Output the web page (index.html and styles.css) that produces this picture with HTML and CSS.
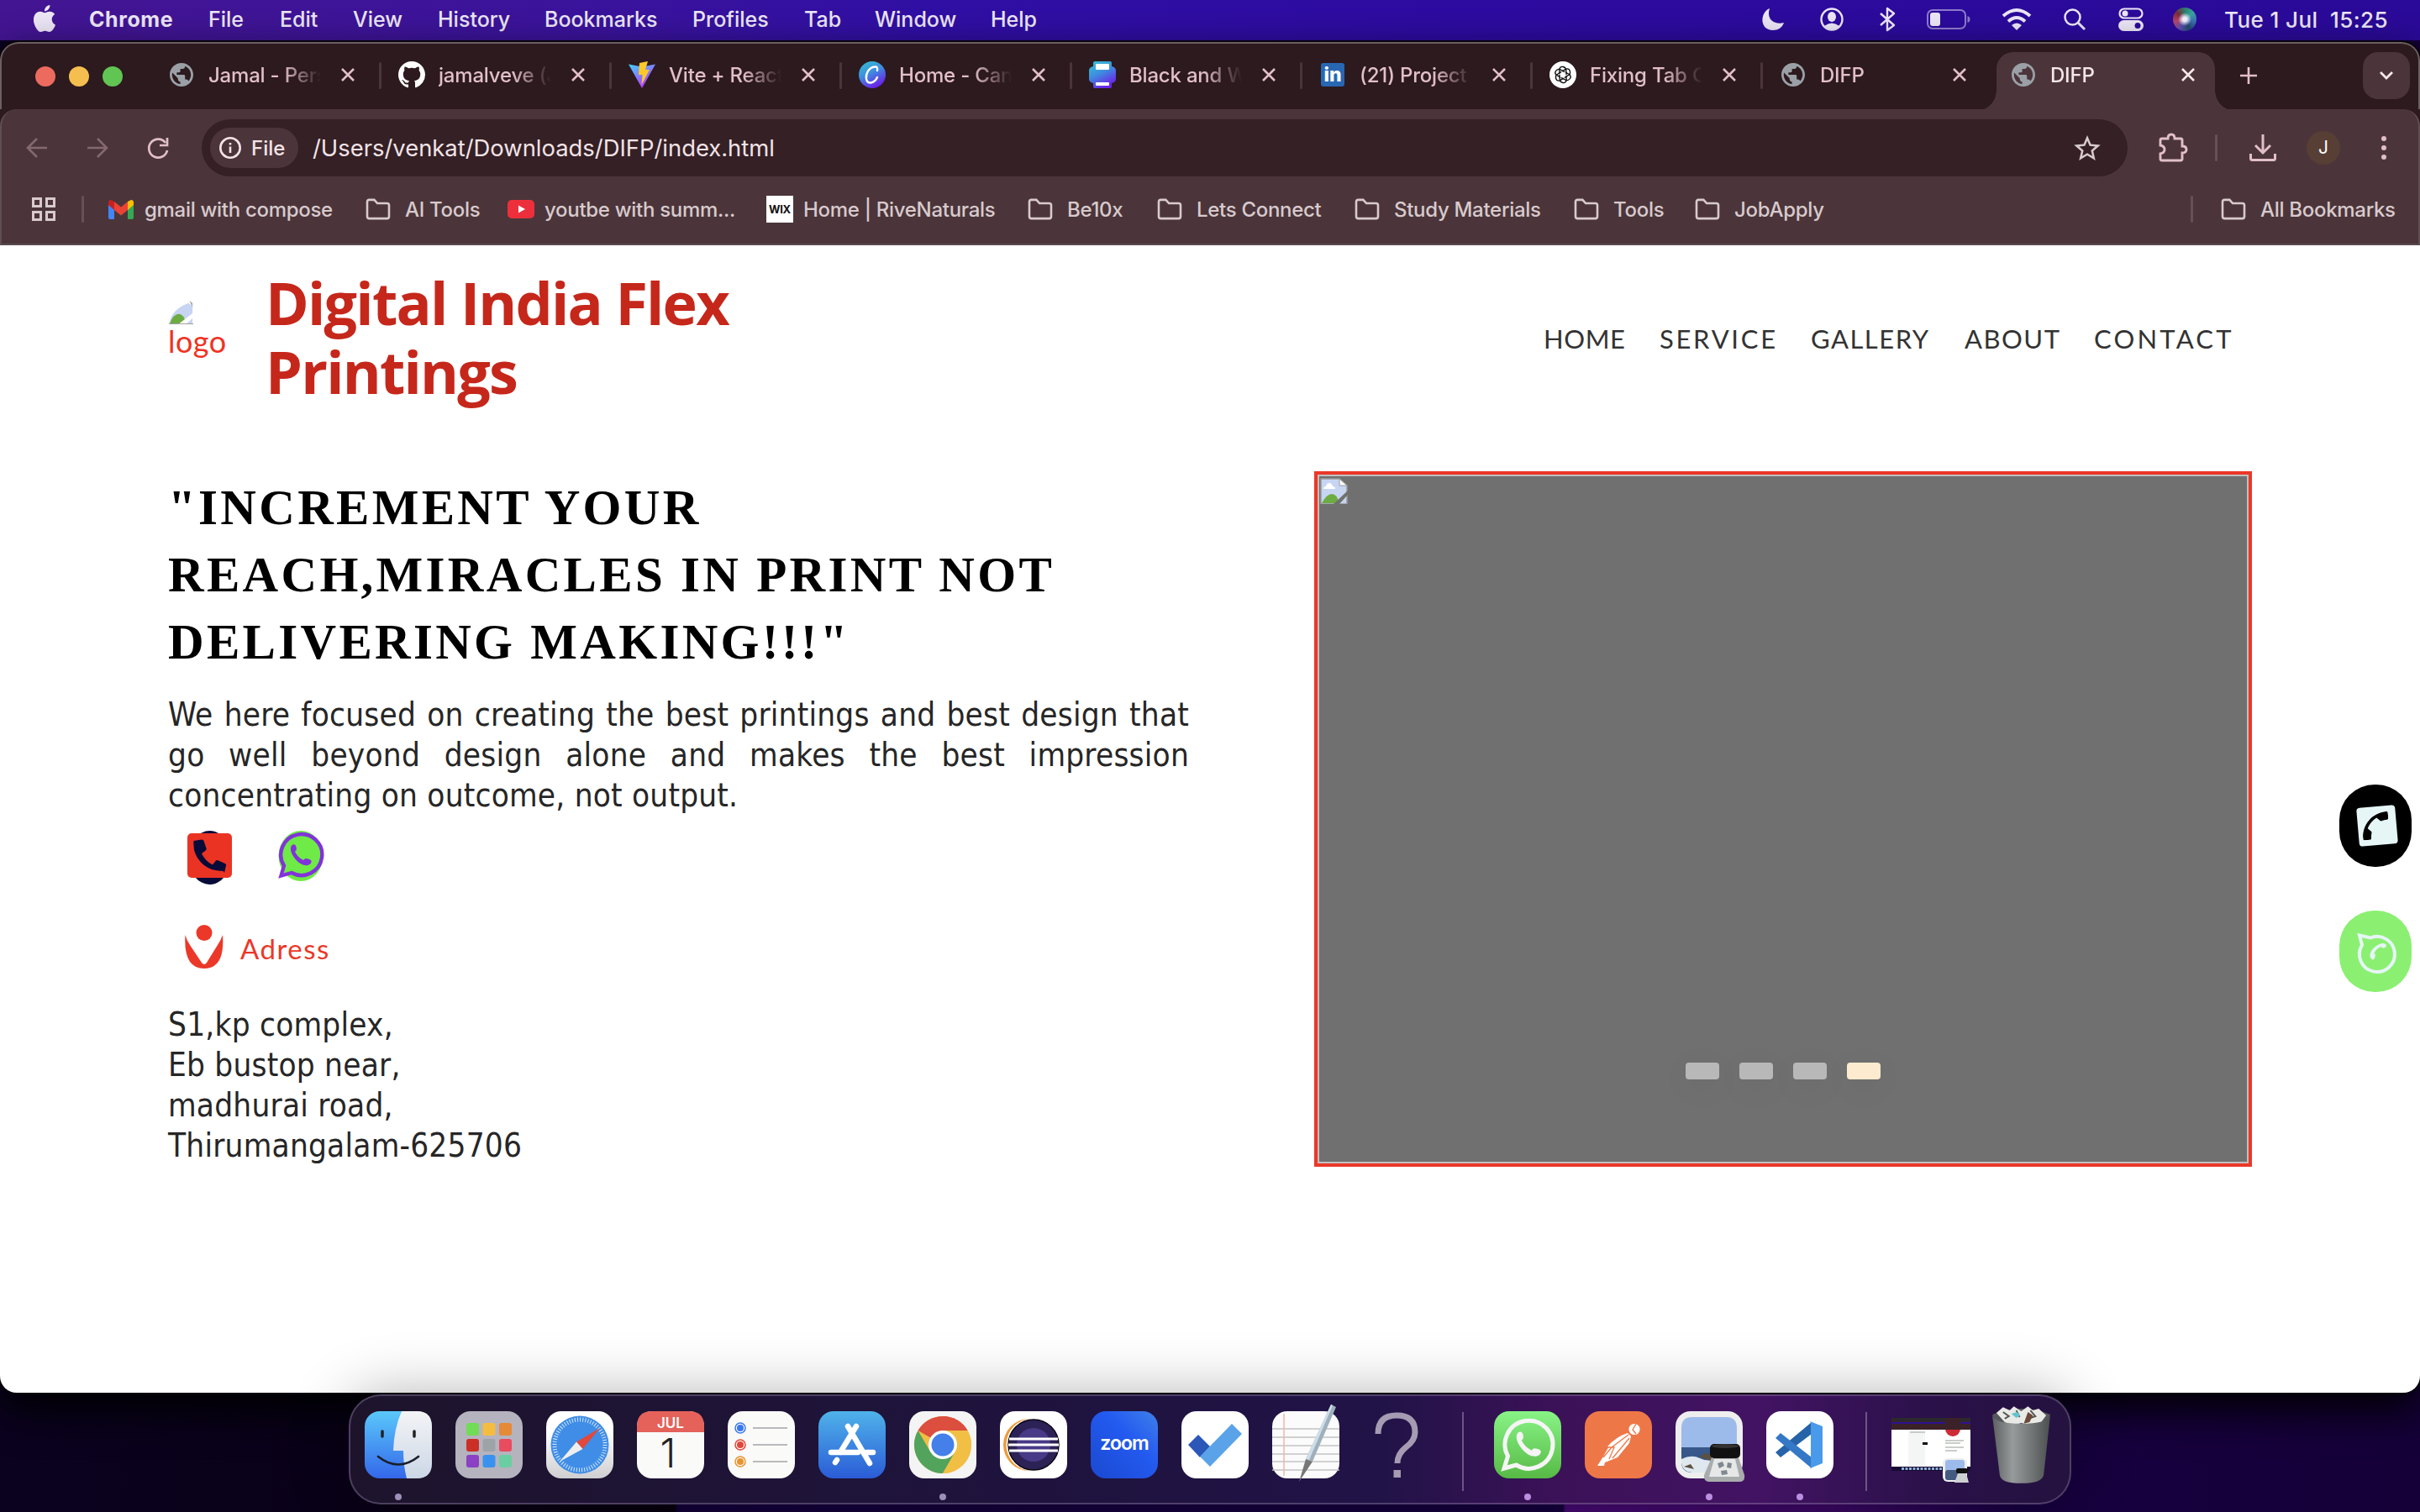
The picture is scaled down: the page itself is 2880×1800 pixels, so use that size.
FILE: index.html
```html
<!DOCTYPE html>
<html lang="en">
<head>
<meta charset="utf-8">
<title>DIFP</title>
<link rel="stylesheet" href="styles.css">
</head>
<body>
<svg class="defs" width="0" height="0" aria-hidden="true">
  <symbol id="globe" viewBox="2 2 20 20"><path d="M12 2C6.480 2 2 6.480 2 12s4.480 10 10 10 10-4.480 10-10S17.520 2 12 2zm-1 17.930c-3.950-.49-7-3.850-7-7.930 0-.62.080-1.210.210-1.790L9 15v1c0 1.100.9 2 2 2v1.930zm6.900-2.540c-.26-.81-1-1.390-1.900-1.390h-1v-3c0-.55-.45-1-1-1H8v-2h2c.55 0 1-.45 1-1V7h2c1.100 0 2-.9 2-2v-.41c2.930 1.190 5 4.060 5 7.410 0 2.080-.8 3.970-2.100 5.390z" fill="#9aa0a6"/></symbol>
  <symbol id="close" viewBox="0 0 20 20"><path d="M3 3l14 14M17 3L3 17" stroke="currentColor" stroke-width="2.600" fill="none"/></symbol>
  <symbol id="folder" viewBox="0 0 32 28"><path d="M2 4.500Q2 2 4.500 2H11l4 4.500h12.500Q30 6.500 30 9v14.500Q30 26 27.500 26h-23Q2 26 2 23.500z" fill="none" stroke="currentColor" stroke-width="2.800"/></symbol>
  <symbol id="call" viewBox="3 3 18 18"><path d="M6.620 10.790c1.440 2.830 3.760 5.140 6.590 6.590l2.200-2.200c.27-.27.67-.36 1.020-.24 1.120.37 2.330.57 3.570.57.55 0 1 .45 1 1V20c0 .55-.45 1-1 1-9.390 0-17-7.610-17-17 0-.55.450-1 1-1h3.500c.55 0 1 .45 1 1 0 1.250.2 2.450.57 3.570.110.350.030.740-.25 1.020l-2.200 2.200z" fill="currentColor"/></symbol>
  <symbol id="handset" viewBox="0 0 30 30"><path d="M2 6Q3 1 7 1.500Q9 2 9.500 6.500Q9.800 9 7.500 10.500Q11 18 18.500 21.500Q20 18.500 23 19.500Q28 20.500 28.500 22.500Q28.500 27 23 28Q15 28.500 8 20Q1.500 12 2 6z" fill="currentColor"/></symbol>
  <symbol id="broken" viewBox="0 0 33 31"><path d="M1 1H23l9 8V31H1z" fill="#c7d5f3" stroke="#9a9a9a" stroke-width="1.500"/><path d="M23 1v8h9z" fill="#fff" stroke="#9a9a9a"/><path d="M4 13q0-3 3-3 1-4 4-4t4 4q3 0 3 3z" fill="#fff"/><path d="M2 30q6-11 12-11t9 11z" fill="#6cac43"/><path d="M16 31L33 15v5L23 31z" class="slash"/></symbol>
</svg>

<header class="menubar">
  <nav class="menus">
    <svg class="apple" viewBox="1.500 0 21 24"><path fill="currentColor" d="M12.152 6.896c-.948 0-2.415-1.078-3.960-1.040-2.040.027-3.910 1.183-4.961 3.014-2.117 3.675-.546 9.103 1.519 12.090 1.013 1.454 2.208 3.090 3.792 3.039 1.520-.065 2.090-.987 3.935-.987 1.831 0 2.350.987 3.960.948 1.637-.026 2.676-1.480 3.676-2.948 1.156-1.688 1.636-3.325 1.662-3.415-.039-.013-3.182-1.221-3.220-4.857-.026-3.040 2.480-4.494 2.597-4.559-1.429-2.090-3.623-2.324-4.390-2.376-2-.156-3.675 1.090-4.610 1.090zM15.530 3.830c.843-1.012 1.400-2.427 1.245-3.830-1.207.052-2.662.805-3.532 1.818-.78.896-1.454 2.338-1.273 3.714 1.338.104 2.715-.688 3.559-1.701"/></svg>
    <b>Chrome</b><span>File</span><span>Edit</span><span>View</span><span>History</span><span>Bookmarks</span><span>Profiles</span><span>Tab</span><span>Window</span><span>Help</span>
  </nav>
  <div class="status">
    <svg width="28" height="28" viewBox="0 0 28 28"><path d="M10 1C-2 6-2 27 14 27c6 0 11-3 13-9C14 21 6 13 10 1z" fill="currentColor"/></svg>
    <svg width="28" height="28" viewBox="0 0 28 28"><circle cx="14" cy="14" r="12.500" fill="none" stroke="currentColor" stroke-width="2.400"/><ellipse cx="14" cy="11" rx="5" ry="6" fill="currentColor"/><path d="M5 22q9-7 18 0-9 8-18 0z" fill="currentColor"/></svg>
    <svg width="20" height="30" viewBox="0 0 20 30"><path d="M2 8l16 14-8 6V2l8 6L2 22" fill="none" stroke="currentColor" stroke-width="2.400" stroke-linejoin="round"/></svg>
    <svg width="52" height="24" viewBox="0 0 52 24"><rect x="1" y="1" width="45" height="22" rx="6" fill="none" stroke="#8f7bcb" stroke-width="2"/><rect x="4" y="4" width="12" height="16" rx="3" fill="currentColor"/><path d="M48.500 8q3 1 3 4t-3 4z" fill="#8f7bcb"/></svg>
    <svg width="36" height="26" viewBox="0 0 36 26"><path d="M2 9q16-14 32 0M8 15.500q10-9 20 0" fill="none" stroke="currentColor" stroke-width="4"/><path d="M12 20q6-5 12 0l-6 6z" fill="currentColor"/></svg>
    <svg width="26" height="26" viewBox="0 0 26 26"><circle cx="10.500" cy="10.500" r="9" fill="none" stroke="currentColor" stroke-width="2.500"/><path d="M17 17l8 8" stroke="currentColor" stroke-width="3"/></svg>
    <svg width="30" height="28" viewBox="0 0 30 28"><rect x="1.500" y="1.500" width="27" height="11" rx="5.500" fill="none" stroke="currentColor" stroke-width="2.200"/><circle cx="8" cy="7" r="3.500" fill="currentColor"/><rect y="15" width="30" height="13" rx="6.500" fill="currentColor"/><circle cx="23" cy="21.500" r="3.500" fill="#2a0a98"/></svg>
    <i class="siri"></i>
    <span class="clock">Tue 1 Jul&nbsp; 15:25</span>
  </div>
</header>

<main class="window">
  <div class="tabstrip">
    <div class="lights"><i class="red"></i><i class="amber"></i><i class="green"></i></div>
    <div class="tab"><svg class="fav small"><use href="#globe"/></svg><span class="title">Jamal - Pers</span><svg class="x"><use href="#close"/></svg></div>
    <div class="tab"><svg class="fav" viewBox="0 0 16 16"><path fill="#fff" d="M8 0C3.580 0 0 3.580 0 8c0 3.540 2.290 6.530 5.470 7.590.4.070.55-.17.55-.38 0-.19-.01-.82-.01-1.490-2.010.37-2.530-.49-2.690-.94-.09-.23-.48-.94-.82-1.130-.28-.15-.68-.52-.01-.53.63-.01 1.080.58 1.230.82.72 1.210 1.870.87 2.330.66.070-.52.28-.87.51-1.070-1.780-.2-3.640-.89-3.640-3.950 0-.87.31-1.590.82-2.150-.08-.2-.36-1.020.080-2.120 0 0 .67-.21 2.200.82.64-.18 1.320-.27 2-.27s1.360.090 2 .27c1.530-1.040 2.200-.82 2.200-.82.44 1.100.16 1.920.080 2.120.51.56.82 1.270.82 2.150 0 3.070-1.870 3.750-3.650 3.950.29.25.54.73.54 1.480 0 1.070-.01 1.930-.01 2.200 0 .21.15.46.55.38A8.010 8.010 0 0 0 16 8c0-4.420-3.580-8-8-8z"/></svg><span class="title">jamalveve (J</span><svg class="x"><use href="#close"/></svg></div>
    <div class="tab"><svg class="fav" viewBox="0 0 32 32"><defs><linearGradient id="vite" x2=".6" y2="1"><stop stop-color="#41d1ff"/><stop offset="1" stop-color="#bd34fe"/></linearGradient></defs><path d="M0 3.500L16 32 32 3.500 16 6.500z" fill="url(#vite)"/><path d="M13 2l10-2-3 10h5L15.500 28l1-12H12z" fill="#ffc928"/></svg><span class="title">Vite + React</span><svg class="x"><use href="#close"/></svg></div>
    <div class="tab"><svg class="fav" viewBox="0 0 32 32"><defs><linearGradient id="canva" x2=".5" y2="1"><stop stop-color="#35c4cc"/><stop offset=".5" stop-color="#3d8fe0"/><stop offset="1" stop-color="#6a25e8"/></linearGradient></defs><circle cx="16" cy="16" r="16" fill="url(#canva)"/><path d="M22 11q1-5-3-4.500C12 7 8 15 9 21q1 5 5.500 4.500Q20 24 22 19" fill="none" stroke="#fff" stroke-width="2.400" stroke-linecap="round"/></svg><span class="title">Home - Can</span><svg class="x"><use href="#close"/></svg></div>
    <div class="tab"><svg class="fav" viewBox="0 0 32 32"><path d="M7 0h18q2 0 2 2v4q5 1 5 5v10q0 4-5 5v4q0 2-2 2H7q-2 0-2-2v-4q-5-1-5-5V11q0-4 5-5V2q0-2 2-2z" fill="url(#canva)"/><rect x="8" y="3" width="16" height="7" rx="1" fill="#fff"/><rect x="8" y="25" width="16" height="4" rx="1" fill="#fff"/></svg><span class="title">Black and W</span><svg class="x"><use href="#close"/></svg></div>
    <div class="tab"><span class="fav small linkedin">in</span><span class="title">(21) Project</span><svg class="x"><use href="#close"/></svg></div>
    <div class="tab"><svg class="fav" viewBox="-16 -16 32 32"><circle r="16" fill="#fff"/><g fill="none" stroke="#111" stroke-width="1.500" transform="scale(.92)"><path id="petal" d="M-1-4.500l5-3q4-1 5 2.500t-1 5L2 4"/><use href="#petal" transform="rotate(60)"/><use href="#petal" transform="rotate(120)"/><use href="#petal" transform="rotate(180)"/><use href="#petal" transform="rotate(240)"/><use href="#petal" transform="rotate(300)"/></g></svg><span class="title">Fixing Tab C</span><svg class="x"><use href="#close"/></svg></div>
    <div class="tab last"><svg class="fav small"><use href="#globe"/></svg><span class="title">DIFP</span><svg class="x"><use href="#close"/></svg></div>
    <div class="tab active"><svg class="fav small"><use href="#globe"/></svg><span class="title">DIFP</span><svg class="x"><use href="#close"/></svg></div>
    <svg class="plus" viewBox="0 0 22 22"><path d="M11 1v20M1 11h20" stroke="currentColor" stroke-width="2.600"/></svg>
    <div class="chev"><svg width="18" height="12" viewBox="0 0 18 12"><path d="M2 2l7 7 7-7" fill="none" stroke="currentColor" stroke-width="2.800"/></svg></div>
  </div>

  <div class="toolbar">
    <div class="navs">
      <svg class="dim" width="26" height="26" viewBox="0 0 26 26"><path d="M25 13H2M13 2L2 13l11 11" fill="none" stroke="currentColor" stroke-width="2.600"/></svg>
      <svg class="dim" width="26" height="26" viewBox="0 0 26 26"><path d="M1 13h23M13 2l11 11-11 11" fill="none" stroke="currentColor" stroke-width="2.600"/></svg>
      <svg width="26" height="26" viewBox="0 0 26 26"><path d="M22 7A11 11 0 1 0 24 16" fill="none" stroke="currentColor" stroke-width="2.700"/><path d="M24 1v9h-9" fill="none" stroke="currentColor" stroke-width="2.700"/></svg>
    </div>
    <div class="omnibox">
      <div class="chip"><svg width="26" height="26" viewBox="0 0 26 26"><circle cx="13" cy="13" r="11.700" fill="none" stroke="currentColor" stroke-width="2.600"/><path d="M13 11.500V19M13 7v2.600" stroke="currentColor" stroke-width="2.600"/></svg><span>File</span></div>
      <span class="url">/Users/venkat/Downloads/DIFP/index.html</span>
      <svg class="star" viewBox="2 2 20 19"><path fill="currentColor" d="M22 9.240l-7.190-.62L12 2 9.190 8.630 2 9.240l5.460 4.730L5.820 21 12 17.270 18.180 21l-1.630-7.030L22 9.240zM12 15.400l-3.760 2.270 1-4.280-3.320-2.880 4.380-.38L12 6.100l1.710 4.040 4.380.38-3.320 2.880 1 4.280L12 15.400z"/></svg>
    </div>
    <div class="actions">
      <svg width="34" height="34" viewBox="0 0 34 34"><path d="M4 6h7q0-5 4-5t4 5h7q2 0 2 2v7q5 0 5 4t-5 4v7q0 2-2 2H4q-2 0-2-2v-6q5-1 5-5t-5-5V8q0-2 2-2z" fill="none" stroke="currentColor" stroke-width="2.900"/></svg>
      <i class="sep"></i>
      <svg width="32" height="32" viewBox="0 0 32 32"><path d="M16 0v21M7 13l9 9 9-9M1.500 23v5.500q0 2 2 2h25q2 0 2-2V23" fill="none" stroke="currentColor" stroke-width="3"/></svg>
      <span class="avatar">J</span>
      <svg width="8" height="28" viewBox="0 0 8 28"><g fill="currentColor"><circle cx="4" cy="3" r="3"/><circle cx="4" cy="14" r="3"/><circle cx="4" cy="25" r="3"/></g></svg>
    </div>
  </div>

  <div class="bookmarks">
    <svg class="apps" viewBox="0 0 28 28"><path d="M1.500 1.500h9v9h-9zM17.500 1.500h9v9h-9zM1.500 17.500h9v9h-9zM17.500 17.500h9v9h-9z" fill="none" stroke="currentColor" stroke-width="3"/></svg>
    <i class="sep"></i>
    <div class="bm"><svg width="30" height="23" viewBox="0 0 30 23"><path d="M0 3v18q0 2 2 2h5V10z" fill="#4285f4"/><path d="M30 3v18q0 2-2 2h-5V10z" fill="#34a853"/><path d="M23 2l4-2q3 0 3 3v3l-7 6z" fill="#fbbc04"/><path d="M7 2L3 0Q0 0 0 3v3l7 6z" fill="#c5221f"/><path d="M7 2l8 6.500L23 2v10l-8 6.500L7 12z" fill="#ea4335"/></svg><span>gmail with compose</span></div>
    <div class="bm"><svg class="folder"><use href="#folder"/></svg><span>AI Tools</span></div>
    <div class="bm"><svg width="32" height="22" viewBox="0 0 32 22"><rect width="32" height="22" rx="5" fill="#ed2f3c"/><path d="M13 6.500l8 4.500-8 4.500z" fill="#fff"/></svg><span>youtbe with summ...</span></div>
    <div class="bm"><em class="wix">WIX</em><span>Home | RiveNaturals</span></div>
    <div class="bm"><svg class="folder"><use href="#folder"/></svg><span>Be10x</span></div>
    <div class="bm"><svg class="folder"><use href="#folder"/></svg><span>Lets Connect</span></div>
    <div class="bm"><svg class="folder"><use href="#folder"/></svg><span>Study Materials</span></div>
    <div class="bm"><svg class="folder"><use href="#folder"/></svg><span>Tools</span></div>
    <div class="bm"><svg class="folder"><use href="#folder"/></svg><span>JobApply</span></div>
    <i class="sep"></i>
    <div class="bm"><svg class="folder"><use href="#folder"/></svg><span>All Bookmarks</span></div>
  </div>

  <div class="page">
    <div class="site-header">
      <div class="logo"><svg class="logo-img" viewBox="0 0 33 31" preserveAspectRatio="none"><path d="M2 31Q3 12 26 3L31 8V31z" fill="#c7d5f3"/><path d="M27 0l4 3v6z" fill="#aaa"/><path d="M2 30Q8 15 16 18q6 3 6 12z" fill="#6cac43"/><path d="M13 31L33 15v6L23 31z" fill="#fff"/><path d="M1 30.500h31" stroke="#999"/></svg><span>logo</span></div>
      <h1>Digital India Flex<br>Printings</h1>
      <nav class="site-nav"><span class="home">HOME</span><span class="service">SERVICE</span><span>GALLERY</span><span>ABOUT</span><span class="reach">CONTACT</span></nav>
    </div>
    <div class="hero">
      <div class="copy">
        <h2>"INCREMENT YOUR<br>REACH,MIRACLES IN PRINT NOT<br>DELIVERING MAKING!!!"</h2>
        <p class="lead">We here focused on creating the best printings and best design that go well beyond design alone and makes the best impression concentrating on outcome, not output.</p>
        <div class="contact">
          <svg width="54" height="64" viewBox="0 0 54 64"><ellipse cx="27.500" cy="32" rx="25" ry="32" fill="#080a38"/><rect x="1" y="3" width="53" height="53" rx="5" fill="#eb3323"/><path d="M8.500 12L18 10.500q2 0 2.500 1.500l3 9q.4 1.600-1 2.800L18 27q4 9 13 13.500l3.500-4.500q1-1.400 2.800-.7l8.500 3.700q1.700.8 1.200 2.500l-2 8.500Q44.500 48 43 48 27 48 17 37.500T8.500 12z" fill="#080a38"/></svg>
          <svg width="54" height="64" viewBox="0 0 54 64"><ellipse cx="27" cy="30" rx="26.500" ry="30" fill="#6eeb46"/><path d="M3.500 53.500L7 41.500A24.500 24.500 0 1 1 16 50z" fill="none" stroke="#8232db" stroke-width="4.400"/><g color="#8232db"><use href="#handset" x="12" y="15" width="30" height="28"/></g></svg>
        </div>
        <div class="place"><svg width="46" height="52" viewBox="0 0 46 52"><circle cx="23" cy="9.500" r="9.500" fill="#eb3829"/><path d="M.5 12Q2 18 6 24L20 45q3 4 6 0L39 24Q43 18 45 12 48 52 23 52T.5 12z" fill="#eb3829"/></svg><span>Adress</span></div>
        <address>S1,kp complex,<br>Eb bustop near,<br>madhurai road,<br>Thirumangalam-625706</address>
      </div>
      <div class="carousel">
        <svg class="broken"><use href="#broken"/></svg>
        <div class="dots"><i></i><i></i><i></i><i class="on"></i></div>
      </div>
    </div>
  </div>
  <div class="float call"><svg width="52" height="52" viewBox="0 0 52 52"><g transform="rotate(-5 26 26)"><rect x="3" y="3" width="46" height="46" rx="4" fill="#e6f5f6"/><g transform="translate(49 0) rotate(90)"><use href="#call" x="10" y="7" width="32" height="32" transform="translate(0 2)"/></g></g></svg></div>
  <div class="float chat"><svg width="50" height="48" viewBox="0 0 50 48"><path d="M4 4.500L17 7.500A21 21 0 1 1 7 16z" fill="none" stroke="#e6f5f6" stroke-width="4"/><g color="#e6f5f6" transform="translate(37 11.500) rotate(90)"><use href="#handset" width="24" height="22"/></g></svg></div>
</main>

<footer class="dock">
  <svg class="app" viewBox="0 0 80 80"><defs><linearGradient id="fb" x2="0" y2="1"><stop stop-color="#5ac8fa"/><stop offset="1" stop-color="#3467ea"/></linearGradient><linearGradient id="fw" x2="0" y2="1"><stop stop-color="#f4f4f6"/><stop offset="1" stop-color="#ccd7e6"/></linearGradient></defs><rect width="80" height="80" rx="18" fill="url(#fb)"/><path d="M44 0h18q18 0 18 18v44q0 18-18 18H50q-4-15-4-33H34Q35 20 44 0z" fill="url(#fw)"/><path d="M21 24v6M59 24v6" stroke="#222" stroke-width="3.500" stroke-linecap="round"/><path d="M16 54q24 19 48 0" fill="none" stroke="#1a1f2b" stroke-width="2.600" stroke-linecap="round"/><circle class="run" cx="40" cy="102" r="4"/></svg>
  <svg class="app" viewBox="0 0 80 80"><rect width="80" height="80" rx="18" fill="#b5b3be"/><g><rect x="13" y="14" width="15" height="15" rx="3" fill="#72dc56"/><rect x="32.500" y="14" width="15" height="15" rx="3" fill="#f5bd3f"/><rect x="52" y="14" width="15" height="15" rx="3" fill="#e58a36"/><rect x="13" y="33" width="15" height="15" rx="3" fill="#cc2f26"/><rect x="32.500" y="33" width="15" height="15" rx="3" fill="#9da4a8"/><rect x="52" y="33" width="15" height="15" rx="3" fill="#e94b5f"/><rect x="13" y="52" width="15" height="15" rx="3" fill="#8a41c4"/><rect x="32.500" y="52" width="15" height="15" rx="3" fill="#3a92ee"/><rect x="52" y="52" width="15" height="15" rx="3" fill="#6bcda2"/></g></svg>
  <svg class="app" viewBox="0 0 80 80"><defs><linearGradient id="sw" x2="0" y2="1"><stop offset=".3" stop-color="#fff"/><stop offset="1" stop-color="#cfcfd1"/></linearGradient></defs><rect width="80" height="80" rx="18" fill="url(#sw)"/><circle cx="40" cy="40" r="34.500" fill="#3f8de6"/><circle cx="40" cy="40" r="30" fill="none" stroke="#d6e8fb" stroke-width="5" stroke-dasharray="1 2.140"/><path d="M64 20L43.500 45 36 36.500z" fill="#e2483c"/><path d="M16 60l27.500-15L36 36.500z" fill="#eee"/></svg>
  <svg class="app" viewBox="0 0 80 80"><rect width="80" height="80" rx="18" fill="#fafaf8"/><path d="M0 25v-7Q0 0 18 0h44q18 0 18 18v7z" fill="#e4625a"/><text class="cal-m" x="40" y="19.500" text-anchor="middle">JUL</text><text class="cal-d" x="37" y="67" text-anchor="middle">1</text></svg>
  <svg class="app" viewBox="0 0 80 80"><rect width="80" height="80" rx="18" fill="#fafaf8"/><g fill="none" stroke-width="1.500"><g stroke="#3a78ee"><circle cx="15" cy="20" r="6"/><circle cx="15" cy="20" r="4" fill="#3a78ee" stroke="none"/></g><g stroke="#e2463a"><circle cx="15" cy="40" r="6"/><circle cx="15" cy="40" r="4" fill="#e2463a" stroke="none"/></g><g stroke="#e8942f"><circle cx="15" cy="60" r="6"/><circle cx="15" cy="60" r="4" fill="#e8942f" stroke="none"/></g></g><path d="M30 20h41M30 40h41M30 60h41" stroke="#b9b9bd" stroke-width="2"/></svg>
  <svg class="app" viewBox="0 0 80 80"><defs><linearGradient id="as" x2="0" y2="1"><stop stop-color="#4fb2ea"/><stop offset="1" stop-color="#2a5cd6"/></linearGradient></defs><rect width="80" height="80" rx="18" fill="url(#as)"/><path d="M45 18L26 49M20 61l2-3M35 18l26 44M15 49h32M57 49h8" stroke="#fff" stroke-width="6.500" stroke-linecap="round" fill="none"/></svg>
  <svg class="app" viewBox="0 0 80 80"><rect width="80" height="80" rx="18" fill="#f4f4f4"/><circle cx="40" cy="40" r="34" fill="#f2bf45"/><path d="M40 40L69.500 23A34 34 0 0 0 10.500 23z" fill="#dc4e3e"/><path d="M40 23h29.500A34 34 0 0 0 40 6z" fill="#dc4e3e"/><path d="M10.500 23A34 34 0 0 0 40 74L54.700 48.500H40L25.300 48.500z" fill="#52a35b"/><path d="M54.700 48.500L40 74A34 34 0 0 0 69.500 23H40z" fill="#f2bf45"/><circle cx="40" cy="40" r="17" fill="#fff"/><circle cx="40" cy="40" r="13.500" fill="#4580ea"/><circle class="run" cx="40" cy="102" r="4"/></svg>
  <svg class="app" viewBox="0 0 80 80"><rect width="80" height="80" rx="18" fill="#fff"/><circle cx="35" cy="40" r="31" fill="#ed9a3b"/><circle cx="39" cy="40" r="31.500" fill="#fff"/><circle cx="40" cy="40" r="30" fill="#2c2255" stroke="#0b0812" stroke-width="1.500"/><circle cx="40" cy="40" r="20" fill="#483a86"/><path d="M11 33h58M10 40h60M11 47h58" stroke="#fff" stroke-width="2.800"/></svg>
  <svg class="app" viewBox="0 0 80 80"><defs><linearGradient id="zm" x1="1" x2="0" y2="1"><stop stop-color="#3f80ea"/><stop offset=".4" stop-color="#235af0"/><stop offset="1" stop-color="#1b49d0"/></linearGradient></defs><rect width="80" height="80" rx="18" fill="url(#zm)"/><text class="zoom-t" x="40" y="46" text-anchor="middle">zoom</text></svg>
  <svg class="app" viewBox="0 0 80 80"><rect width="80" height="80" rx="18" fill="#fff"/><path d="M8 40l12-12 14 14-12 13z" fill="#2b57b8"/><path d="M22 54L60 15l12 12-38 39z" fill="#5ba3e8"/></svg>
  <svg class="app" viewBox="0 0 80 80"><rect width="80" height="80" rx="18" fill="#fbfbfb"/><path d="M0 21h80M0 31h80M0 41h80M0 51h80M0 60h80M0 70h80" stroke="#c4c4c6" stroke-width="1.500"/><path d="M14 3v74" stroke="#f0b4b0" stroke-width="1.500"/><path d="M70-8l6 3-28 65-8-3z" fill="#9fb0bd"/><path d="M70-8l2 1-28 65-4-1z" fill="#cfdde8"/><path d="M40 57l8 3-16 24z" fill="#777"/></svg>
  <svg class="app" viewBox="0 0 80 80"><path d="M19 27Q19 5 41 5t22 20q0 10-11 18-10 8-10 19" transform="translate(-1 0)" fill="none" stroke="#a59bb2" stroke-width="7"/><rect x="36.500" y="70" width="8.500" height="9" fill="#a59bb2"/></svg>
  <i class="bar"></i>
  <svg class="app alt" viewBox="0 0 80 80"><defs><linearGradient id="wa" x2="0" y2="1"><stop stop-color="#88f386"/><stop offset="1" stop-color="#57ba45"/></linearGradient></defs><rect width="80" height="80" rx="18" fill="url(#wa)"/><path d="M12 68l4.500-14.500A28.500 28.500 0 1 1 26.500 64z" fill="none" stroke="#f5f5f5" stroke-width="5"/><g color="#f5f5f5"><use href="#handset" x="24" y="23" width="34" height="33"/></g><circle class="run" cx="40" cy="102" r="4"/></svg>
  <svg class="app" viewBox="0 0 80 80"><rect width="80" height="80" rx="18" fill="#ee7748"/><circle cx="59" cy="21.500" r="6.600" fill="#fff"/><path d="M51 26l4 4-2 8-14 17-15 6-1 4h-8l7-11 9-16z" fill="#fff"/><path d="M51 26Q38 30 27 42l6 3z" fill="#fff"/><path d="M22 55l10-12 20-15M26 43h9l-6 14M33 56l20-24M61 15l-4 7 4 5" fill="none" stroke="#ee7748" stroke-width="1.300"/></svg>
  <svg class="app alt" viewBox="0 0 80 80"><rect width="80" height="80" rx="18" fill="#eee"/><path d="M7 43V20Q7 7 20 7h40q13 0 13 13v23z" fill="#9dbbea"/><path d="M7 43h66v17q0 13-13 13H20Q7 73 7 60z" fill="#38578a"/><path d="M7 57q12-6 22-1t24 0v17H20Q9 73 7 62z" fill="#dfe8ee"/><path d="M28 54l8-4 12 3-6 6zM10 66l8-3 4 6z" fill="#5c5140"/><path d="M43 55h32l7 21q1 8-6 8H41q-8 0-7-8z" fill="#a9acad"/><path d="M46 57h25l5 21H40z" fill="#e6e8e8"/><path d="M50 62l6-2 2 5-6 3zM62 61l5 1-1 6-5-1zM54 71l7-1 1 5-7 1z" fill="#808890"/><rect x="41" y="39" width="36" height="17" rx="5" fill="#111"/><ellipse cx="59" cy="41.500" rx="16" ry="2.500" fill="#333"/><circle class="run" cx="40" cy="102" r="4"/></svg>
  <svg class="app alt" viewBox="0 0 80 80"><rect width="80" height="80" rx="18" fill="#fff"/><path d="M11 49l6 6 37-28V13z" fill="#2663a8"/><path d="M11 32l6-6 37 29v13z" fill="#3478c6"/><path d="M52 12l15 6v44l-15 6q1-1 1-3V15q0-2-1-3z" fill="#4a9aeb"/><circle class="run" cx="40" cy="102" r="4"/></svg>
  <i class="bar second"></i>
  <svg class="mini" viewBox="0 0 94 80"><rect y="9" width="94" height="63" fill="#fff"/><rect y="9" width="94" height="14" fill="#3a2228"/><rect y="9" width="94" height="4" fill="#2a2a2e"/><rect y="14" width="94" height="2" fill="#2d1390"/><path d="M20 25h20v41H20z" fill="#f4f6f5"/><path d="M22 26h18M64 36h22M64 39h18M64 44h22M64 48h14" stroke="#b9bdb9" stroke-width="1.500"/><rect x="37" y="38" width="6" height="3" fill="#111"/><circle cx="73" cy="22" r="9" fill="#ce2a35"/><rect x="64" y="9" width="18" height="14" fill="#3a2228"/><rect y="67" width="94" height="5" fill="#160a33"/><path d="M12 69.500h50" stroke="#8fb0d8" stroke-width="3" stroke-dasharray="3 1.500"/><rect x="61" y="57" width="29" height="28" rx="6" fill="#eee"/><rect x="64" y="59" width="23" height="14" rx="3" fill="#9dbbea"/><rect x="64" y="71" width="23" height="12" rx="3" fill="#445a80"/><rect x="77" y="69" width="14" height="6" rx="2" fill="#111"/><path d="M79 75h10l3 11H75z" fill="#cdd0d1"/></svg>
  <svg class="trash" viewBox="0 0 72 94"><defs><linearGradient id="tr"><stop stop-color="#5c5f60"/><stop offset=".35" stop-color="#989b9c"/><stop offset=".7" stop-color="#707374"/><stop offset="1" stop-color="#4b4e4f"/></linearGradient></defs><path d="M1 11q35-14 70 0-4 14-35 14T1 11z" fill="#55585a"/><path d="M6 9l8-7 8 4 5-5 9 6 8-6 6 5 7-2 9 8-6 8-14 5-10-4-10 4-10-5z" fill="#e9e9e6"/><path d="M14 8l7 5-5 3M30 6l4 8M47 6l6 7-6 2" stroke="#555" stroke-width="2" fill="none"/><path d="M24 10l7-2 4 4-5 3z" fill="#62c3cc"/><path d="M44 8l6 4-4 8-7 2z" fill="#6b4a3a"/><path d="M1 12q4 10 35 10t35-10l-8 72q-2 10-27 10T10 84z" fill="url(#tr)"/></svg>
</footer>
</body>
</html>
```
FILE: styles.css
```css
* { box-sizing: border-box; }
body {
  margin: 0; width: 2880px; height: 1800px; overflow: hidden;
  display: flex; flex-direction: column;
  font-family: Inter, "Liberation Sans", sans-serif;
  background: linear-gradient(90deg, #0b0220 0, #07000f 804px, #13003a 806px, #14003c 1860px, #450a70 1863px, #3a0862 2180px, #170040 2400px, #150038 100%);
}
svg { display: block; flex: none; overflow: visible; }
.defs { position: absolute; }
h1, h2, p { margin: 0; }

/* macOS menu bar */
.menubar {
  flex: none; height: 48px; padding-bottom: 2px; display: flex; justify-content: space-between; align-items: center;
  color: #ece6f6; font-size: 25px; font-weight: 500;
  background: linear-gradient(90deg, #431592 0, #3a139c 25%, #300fa4 38%, #2d0ba0 60%, #2a0a98 100%);
}
.menus {
  display: grid; align-items: center; padding-left: 39px;
  grid-template-columns: 67px 142px 85px 87px 101px 127px 176px 133px 84px 138px 60px;
}
.menus b { font-weight: 700; letter-spacing: .6px; }
.apple { width: 28px; height: 32px; margin-top: -2px; }
.status {
  display: grid; width: 805px; align-items: center; justify-items: center;
  grid-template-columns: 70px 70px 62px 84px 78px 60px 74px 54px 1fr;
}
.clock { justify-self: start; margin-left: 20px; white-space: pre; font-size: 26px; letter-spacing: .4px; }
.siri { width: 28px; height: 28px; border-radius: 50%; background: radial-gradient(circle at 50% 50%, #f3f0ff 0 12%, transparent 40%), conic-gradient(#2c7d6c, #3aa4a0, #3c6fb0, #23486e, #5b4fb0, #b5476a, #7c2a3c, #2c7d6c); }

/* Browser window */
.window {
  position: relative; flex: none; height: 1608px; margin-top: 2px; display: flex; flex-direction: column;
  border-radius: 22px 22px 20px 20px; overflow: hidden; background: #2c1a1e;
  box-shadow: 0 0 0 2px #08040c, 0 20px 50px #000;
}
.tabstrip { flex: none; height: 80px; display: flex; align-items: flex-start; padding-top: 12px; border: solid #6c5e61; border-width: 2px 2px 0; border-radius: 22px 22px 0 0; color: #e2bfc8; }
.lights { display: flex; gap: 16px; width: 176px; padding: 15px 0 0 40px; }
.lights i { width: 24px; height: 24px; border-radius: 50%; }
.red { background: #ed6a5f; }
.amber { background: #f5bf4f; }
.green { background: #61c554; }
.tab { position: relative; flex: none; width: 274px; height: 66px; margin-top: -2px; padding: 0 28px 12px 22px; display: flex; align-items: center; font-size: 24px; font-weight: 500; }
.tab::after { content: ""; position: absolute; right: -2px; top: 12px; width: 3px; height: 32px; border-radius: 2px; background: #4b353a; }
.tab.last::after, .tab.active::after { display: none; }
.fav { width: 32px; height: 32px; margin-right: 16px; flex: none; }
.fav.small { width: 28px; height: 28px; margin: 0 18px 0 2px; }
.linkedin { background: #2867b2; border-radius: 3px; color: #fff; font-weight: 800; font-size: 23px; line-height: 28px; text-align: center; }
.title { width: 134px; overflow: hidden; white-space: nowrap; letter-spacing: -.2px; -webkit-mask-image: linear-gradient(90deg, #000 66%, transparent 100%); mask-image: linear-gradient(90deg, #000 66%, transparent 100%); }
.x { width: 20px; height: 20px; margin-left: 22px; }
.tab.active { color: #f5e6ea; padding-left: 16px; margin-left: 6px; width: 260px; height: 70px; padding-bottom: 16px; padding-right: 0; border-radius: 20px 20px 0 0; background: #4b353a; }
.active .x { margin-left: 20px; }
.tab.active::before { content: ""; position: absolute; z-index: 0; left: -24px; right: -24px; bottom: 0; height: 24px; background: radial-gradient(circle at 0 0, transparent 23.5px, #4b353a 24px) left/24px 24px no-repeat, radial-gradient(circle at 100% 0, transparent 23.5px, #4b353a 24px) right/24px 24px no-repeat; }
.plus { width: 22px; height: 22px; margin: 15px 0 0 29px; }
.chev { width: 56px; height: 56px; margin: -2px 10px 0 auto; border-radius: 18px; background: #4b353a; display: grid; place-items: center; color: #f5e6ea; }

.toolbar, .bookmarks { flex: none; background: #4b353a; border: solid #5f4f53; border-width: 0 2px; }
.toolbar { height: 92px; display: flex; align-items: center; color: #e2bfc8; border-radius: 20px 20px 0 0; }
.navs { width: 238px; display: flex; gap: 46px; padding-left: 29px; }
.dim { color: #84696f; }
.omnibox { width: 2292px; height: 68px; border-radius: 34px; background: #342025; display: flex; align-items: center; padding: 0 32px 0 10px; color: #f3e3e7; font-size: 27.400px; }
.chip { width: 105px; height: 48px; border-radius: 24px; background: #4b353a; display: flex; align-items: center; gap: 12px; padding-left: 11px; font-size: 24px; font-weight: 500; }
.url { margin-left: 17px; }
.star { width: 32px; height: 30px; margin-left: auto; color: #d8cacd; }
.actions { display: flex; align-items: center; margin-left: 37px; }
.sep { width: 3px; height: 32px; border-radius: 2px; background: #6a4f56; }
.actions .sep { margin: 0 38px 0 33px; }
.avatar { width: 40px; height: 40px; margin: 0 48px 0 36px; border-radius: 50%; background: #573f35; color: #fff; font-size: 21px; line-height: 40px; text-align: center; }

.bookmarks { height: 70px; padding: 0 0 14px 36px; display: grid; align-items: center; border-bottom: 2px solid #5a4a4e; color: #d8cacd; font-size: 24px; font-weight: 500; letter-spacing: -.3px; grid-template-columns: 59px 32px 305px 170px 308px 310px 154px 235px 261px 144px 591px 35px 1fr; }
.apps { width: 28px; height: 28px; }
.bm { display: flex; align-items: center; gap: 12px; white-space: nowrap; }
.bm:nth-child(3) { gap: 13px; }
.folder { width: 32px; height: 26px; margin-right: 4px; }
.wix { width: 32px; height: 32px; background: #fff; color: #111; font: 700 13px/32px Inter, sans-serif; text-align: center; }

/* Site */
.page { flex: 1; background: #fff; padding: 0 200px; }
.site-header { height: 218px; display: flex; align-items: center; }
.logo { width: 116px; padding-bottom: 18px; color: #f03322; font: 36px/40px Lato, sans-serif; letter-spacing: .5px; }
.logo-img { width: 31px; height: 28px; }
.logo span { display: block; }
h1 { width: 620px; color: #c6271b; font: 700 70px/82px "Open Sans", sans-serif; letter-spacing: -1.800px; }
.site-nav { margin-left: auto; width: 843px; padding-top: 4px; display: grid; grid-template-columns: 138px 180px 183px 154px 1fr; color: #333; font: 31px/40px Lato, sans-serif; letter-spacing: 1.500px; }
.site-nav .home { letter-spacing: .6px; }
.site-nav .service { letter-spacing: 2.700px; }
.site-nav .reach { letter-spacing: 3.200px; }
.hero { display: flex; justify-content: space-between; padding-top: 51px; }
.copy { width: 1215px; padding-top: 3px; }
h2 { color: #000; font: 700 59px/80px "Liberation Serif", serif; letter-spacing: 3.300px; white-space: nowrap; }
.lead, address { color: #262626; font: normal 38.400px/48px "DejaVu Sans Condensed", "DejaVu Sans", sans-serif; font-stretch: condensed; letter-spacing: .2px; }
.lead { margin-top: 23px; text-align: justify; }
.contact { display: flex; gap: 55px; margin-top: 18px; padding-left: 22px; }
.place { display: flex; align-items: center; gap: 20px; margin-top: 48px; padding-left: 20px; color: #eb3829; font: 33px/40px Lato, sans-serif; letter-spacing: 1.500px; }
.place span { margin-top: 4px; }
address { margin-top: 43px; }
.carousel { width: 1116px; height: 828px; border: 4px solid #eb3829; background: #707070; box-shadow: inset 0 0 0 2px #c0c0c0; display: flex; flex-direction: column; justify-content: space-between; align-items: center; padding: 4px 3px 100px; }
.broken { width: 33px; height: 31px; align-self: flex-start; }
.slash { fill: #707070; }
.dots { display: flex; gap: 24px; }
.dots i { width: 40px; height: 20px; border-radius: 4px; background: #b8b8b8; box-shadow: 0 8px 40px rgba(0, 0, 0, .06); }
.dots .on { background: #fcebcf; }
.float { position: absolute; left: 2784px; width: 86px; display: grid; place-items: center; border-radius: 42px; }
.float svg { margin-left: 4px; }
.call { top: 884px; height: 98px; background: #000; }
.chat { top: 1034px; height: 97px; background: #8bf072; }

/* Dock */
.dock {
  position: relative; flex: none; width: 2050px; height: 131px; margin: 2px auto 0; padding: 19px 17px 0;
  display: flex; align-items: flex-start; gap: 28px; border: 2px solid rgba(150, 130, 170, .4); border-radius: 38px;
  background: linear-gradient(90deg, #1d142c 0, #1f1340 45%, #211347 60%, #3b1157 70%, #421363 82%, #2a1149 92%, #24123f 100%);
  box-shadow: 0 0 70px rgba(0, 0, 0, .3);
}
.app { width: 80px; height: 80px; margin-top: -1px; }
.run { fill: #9d8fb8; }
.alt .run { fill: #bb8ee0; }
.bar { width: 2px; height: 94px; margin: 0 8px 0 10px; background: #6a5685; }
.bar.second { margin-right: 1px; }
.mini { width: 94px; height: 80px; margin-top: -2px; }
.trash { width: 71px; height: 93px; margin: -8px 0 0 -3px; }
.cal-m { font: 600 17px Inter, sans-serif; fill: #fff; }
.cal-d { font: 300 48px Inter, sans-serif; fill: #222; }
.zoom-t { font: 600 23px Inter, sans-serif; fill: #fff; letter-spacing: -1px; }
```
